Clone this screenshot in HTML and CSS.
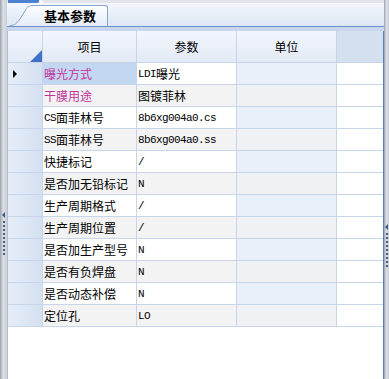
FILE: index.html
```html
<!DOCTYPE html>
<html>
<head>
    <title>基本参数</title>
    <link rel="stylesheet" href="styles.css">
</head>
<body>
    <div class="frame">
        <div class="side side-left">
            <span class="grip-arrow"></span>
            <span class="grip"></span>
        </div>
        <div class="main">
            <div class="topbar"><span class="topbar-blue"></span><span class="topbar-notch"></span></div>
            <div class="tabstrip">
                <div class="tab">
                    <svg class="tab-slant" width="23" height="21" viewBox="0 0 23 21">
                        <defs>
                            <linearGradient id="tabfill" x1="0" y1="0" x2="0" y2="1">
                                <stop offset="0" stop-color="#fbfcfe"/>
                                <stop offset="1" stop-color="#e6edf8"/>
                            </linearGradient>
                        </defs>
                        <path d="M0 21 L0 20 C5 20 7 18 10 14 L15 6 C17 2 19 0.5 23 0.5 L23 21 Z" fill="url(#tabfill)"/>
                        <path d="M0 20.5 C5 20.5 7 18 10 14 L15 6 C17 2 19 0.5 23 0.5" fill="none" stroke="#8ba3c9" stroke-width="1"/>
                    </svg>
                    <div class="tab-label">基本参数</div>
                </div>
            </div>
            <div class="grid-band"></div>
            <div class="grid-wrap">
                <div class="grid">
                    <div class="hcell corner">
                        <svg width="12" height="12" viewBox="0 0 12 12"><path d="M12 0 L12 12 L0 12 Z" fill="#3f72c8"/></svg>
                    </div>
                    <div class="hcell">项目</div>
                    <div class="hcell">参数</div>
                    <div class="hcell">单位</div>
                    <div class="hcell hcell-empty"></div>

                    <div class="rhead"><span class="pointer"></span></div>
                    <div class="cell name selected pink">曝光方式</div>
                    <div class="cell val"><span class="lat">LDI</span>曝光</div>
                    <div class="cell unit"></div>
                    <div class="cell tail"></div>

                    <div class="rhead"></div>
                    <div class="cell name pink even">干膜用途</div>
                    <div class="cell val even">图镀菲林</div>
                    <div class="cell unit even"></div>
                    <div class="cell tail"></div>

                    <div class="rhead"></div>
                    <div class="cell name"><span class="lat">CS</span>面菲林号</div>
                    <div class="cell val"><span class="lat">8b6xg004a0.cs</span></div>
                    <div class="cell unit"></div>
                    <div class="cell tail"></div>

                    <div class="rhead"></div>
                    <div class="cell name even"><span class="lat">SS</span>面菲林号</div>
                    <div class="cell val even"><span class="lat">8b6xg004a0.ss</span></div>
                    <div class="cell unit even"></div>
                    <div class="cell tail"></div>

                    <div class="rhead"></div>
                    <div class="cell name">快捷标记</div>
                    <div class="cell val"><span class="lat">/</span></div>
                    <div class="cell unit"></div>
                    <div class="cell tail"></div>

                    <div class="rhead"></div>
                    <div class="cell name even">是否加无铅标记</div>
                    <div class="cell val even"><span class="lat">N</span></div>
                    <div class="cell unit even"></div>
                    <div class="cell tail"></div>

                    <div class="rhead"></div>
                    <div class="cell name">生产周期格式</div>
                    <div class="cell val"><span class="lat">/</span></div>
                    <div class="cell unit"></div>
                    <div class="cell tail"></div>

                    <div class="rhead"></div>
                    <div class="cell name even">生产周期位置</div>
                    <div class="cell val even"><span class="lat">/</span></div>
                    <div class="cell unit even"></div>
                    <div class="cell tail"></div>

                    <div class="rhead"></div>
                    <div class="cell name">是否加生产型号</div>
                    <div class="cell val"><span class="lat">N</span></div>
                    <div class="cell unit"></div>
                    <div class="cell tail"></div>

                    <div class="rhead"></div>
                    <div class="cell name even">是否有负焊盘</div>
                    <div class="cell val even"><span class="lat">N</span></div>
                    <div class="cell unit even"></div>
                    <div class="cell tail"></div>

                    <div class="rhead"></div>
                    <div class="cell name">是否动态补偿</div>
                    <div class="cell val"><span class="lat">N</span></div>
                    <div class="cell unit"></div>
                    <div class="cell tail"></div>

                    <div class="rhead"></div>
                    <div class="cell name even">定位孔</div>
                    <div class="cell val even"><span class="lat">LO</span></div>
                    <div class="cell unit even"></div>
                    <div class="cell tail"></div>
                </div>
            </div>
        </div>
        <div class="side side-right">
            <span class="grip-arrow"></span>
            <span class="grip"></span>
        </div>
    </div>
</body>
</html>
```
FILE: styles.css
```css
html, body {
    margin: 0;
    padding: 0;
    background: #ffffff;
}

body {
    font-family: "Noto Sans CJK SC", "Liberation Sans", sans-serif;
    font-size: 12px;
    color: #000000;
    overflow: hidden;
}

.frame {
    display: flex;
    width: 389px;
    height: 379px;
}

/* splitter strips at both sides */
.side {
    display: flex;
    flex-direction: column;
    align-items: center;
    gap: 3px;
    background: linear-gradient(to right, #9ba1aa, #dde0e5 45%, #c9ced6);
}
.side-left {
    width: 7px;
    padding-top: 212px;
}
.side-right {
    width: 5px;
    padding-top: 224px;
}
.grip-arrow {
    width: 0;
    height: 0;
    border-top: 3px solid transparent;
    border-bottom: 3px solid transparent;
    border-right: 3px solid #3d5a86;
}
.grip {
    width: 2px;
    height: 34px;
    background: repeating-linear-gradient(to bottom, #41608f 0, #41608f 2px, transparent 2px, transparent 4px);
}

.main {
    flex: 1;
    display: flex;
    flex-direction: column;
    min-width: 0;
}

.topbar {
    height: 3px;
    display: flex;
    background: #e1e5eb;
}
.topbar-blue {
    width: 31px;
    margin-left: 1px;
    background: #4d82d2;
}
.topbar-notch {
    width: 0;
    height: 0;
    border-left: 3px solid transparent;
    border-right: 3px solid transparent;
    border-bottom: 3px solid #ffffff;
    margin-left: -1px;
}

.tabstrip {
    height: 23px;
    display: flex;
    align-items: flex-end;
    background: linear-gradient(to bottom, #f4f7fc, #dce6f5);
}
.tab {
    display: flex;
    align-items: flex-end;
    margin-left: 3px;
}
.tab-slant {
    display: block;
}
.tab-label {
    height: 20px;
    line-height: 20px;
    padding: 0 11px 0 11px;
    font-size: 13px;
    font-weight: bold;
    border-top: 1px solid #8ba3c9;
    border-right: 1px solid #8ba3c9;
    border-top-right-radius: 3px;
    background: linear-gradient(to bottom, #fbfcfe, #e6edf8);
}

.grid-band {
    height: 4px;
    border-top: 1px solid #6f8fc4;
    background: #c8d7ee;
}

.grid-wrap {
    flex: 1;
    border-left: 1px solid #aebfd8;
    border-right: 1px solid #5f7fb5;
    background: #ffffff;
}

.grid {
    display: grid;
    grid-template-columns: 34px 93px 99px 99px 46px;
    grid-template-rows: 31px;
    grid-auto-rows: 21px;
    gap: 1px;
    padding-bottom: 1px;
    background: #c6d5ea;
}

.hcell {
    display: flex;
    align-items: center;
    justify-content: center;
    background: linear-gradient(to bottom, #f3f6fc, #e2eaf6);
}
.hcell-empty {
    background: #d5e0ef;
}
.corner {
    align-items: flex-end;
    justify-content: flex-end;
}
.corner svg {
    display: block;
}

.rhead {
    display: flex;
    align-items: center;
    padding-left: 5px;
    background: linear-gradient(to right, #e6edf8, #d4e0f1);
}
.pointer {
    width: 0;
    height: 0;
    border-top: 4px solid transparent;
    border-bottom: 4px solid transparent;
    border-left: 4px solid #000000;
}

.cell {
    display: flex;
    align-items: center;
    padding-left: 1px;
    white-space: nowrap;
    overflow: hidden;
    background: #ffffff;
}
.cell.even {
    background: #f3f3f3;
}
.cell.unit {
    background: #e9f0fa;
}
.cell.unit.even {
    background: #eff1f4;
}
.cell.tail {
    background: #ffffff;
}
.cell.selected {
    background: #c3d7f1;
}
.pink {
    color: #c2359b;
}

.lat {
    font-family: "Liberation Mono", monospace;
    font-size: 11px;
    letter-spacing: -0.6px;
}
```
